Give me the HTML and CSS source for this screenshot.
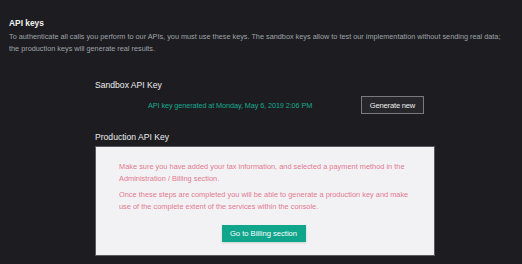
FILE: index.html
```html
<!DOCTYPE html>
<html>
<head>
<meta charset="utf-8">
<link rel="stylesheet" href="styles.css">
</head>
<body>
<div class="page">
  <h1 class="title">API keys</h1>
  <p class="desc"><span class="nowrap">To authenticate all calls you perform to our APIs, you must use these keys. The sandbox keys allow to test our implementation without sending real data;</span><br>the production keys will generate real results.</p>
  <div class="keys">
    <h2 class="key-title">Sandbox API Key</h2>
    <div class="sandbox-row">
      <span class="generated">API key generated at Monday, May 6, 2019 2:06 PM</span>
      <button class="btn-outline">Generate new</button>
    </div>
    <h2 class="key-title prod-title">Production API Key</h2>
    <div class="prod-box">
      <p class="warn">Make sure you have added your tax information, and selected a payment method in the Administration / Billing section.</p>
      <p class="warn">Once these steps are completed you will be able to generate a production key and make use of the complete extent of the services within the console.</p>
      <div class="btn-wrap"><button class="btn-green">Go to Billing section</button></div>
    </div>
  </div>
</div>
</body>
</html>
```
FILE: styles.css
```css
html, body {
  margin: 0;
  padding: 0;
  background: #1d1d21;
  width: 522px;
  height: 264px;
  overflow: hidden;
}
.page {
  font-family: "Liberation Sans", Arial, sans-serif;
  padding: 17px 0 0 9px;
}
.title {
  margin: 0;
  font-size: 8.4px;
  font-weight: bold;
  color: #f2f2f2;
  line-height: 12px;
}
.desc {
  margin: 2px 0 0 0;
  font-size: 7.3px;
  line-height: 12px;
  color: #9ea3a8;
}
.nowrap {
  white-space: nowrap;
}
.keys {
  margin: 24px 0 0 86px;
  width: 340px;
}
.key-title {
  margin: 0;
  font-size: 8.6px;
  font-weight: normal;
  color: #ececec;
  line-height: 12px;
}
.sandbox-row {
  display: flex;
  align-items: center;
  margin-top: 5px;
  height: 18px;
}
.generated {
  margin-left: 53px;
  font-size: 7.3px;
  letter-spacing: -0.1px;
  color: #17a88f;
}
.btn-outline {
  margin-left: auto;
  margin-right: 11px;
  width: 63px;
  height: 18px;
  padding: 0;
  background: #26262b;
  border: 1px solid #7a7a7e;
  color: #eeeeee;
  font-family: "Liberation Sans", Arial, sans-serif;
  font-size: 7.6px;
  letter-spacing: -0.2px;
}
.prod-title {
  margin-top: 17px;
}
.prod-box {
  margin-top: 3px;
  background: #f2f2f4;
  border: 1px solid #5a5a5e;
  height: 110px;
  box-sizing: border-box;
  padding: 14px 14px 0 23px;
}
.warn {
  margin: 0 0 5px 0;
  font-size: 7.4px;
  line-height: 11.5px;
  color: #e27a91;
}
.btn-wrap {
  display: flex;
  justify-content: center;
  margin-top: 13px;
}
.btn-green {
  margin-left: -12px;
  width: 84px;
  height: 17px;
  padding: 0;
  border: none;
  background: #0fa68c;
  color: #ffffff;
  font-family: "Liberation Sans", Arial, sans-serif;
  font-size: 7.6px;
  box-shadow: 0 1px 2px rgba(0,0,0,0.15);
}
```
